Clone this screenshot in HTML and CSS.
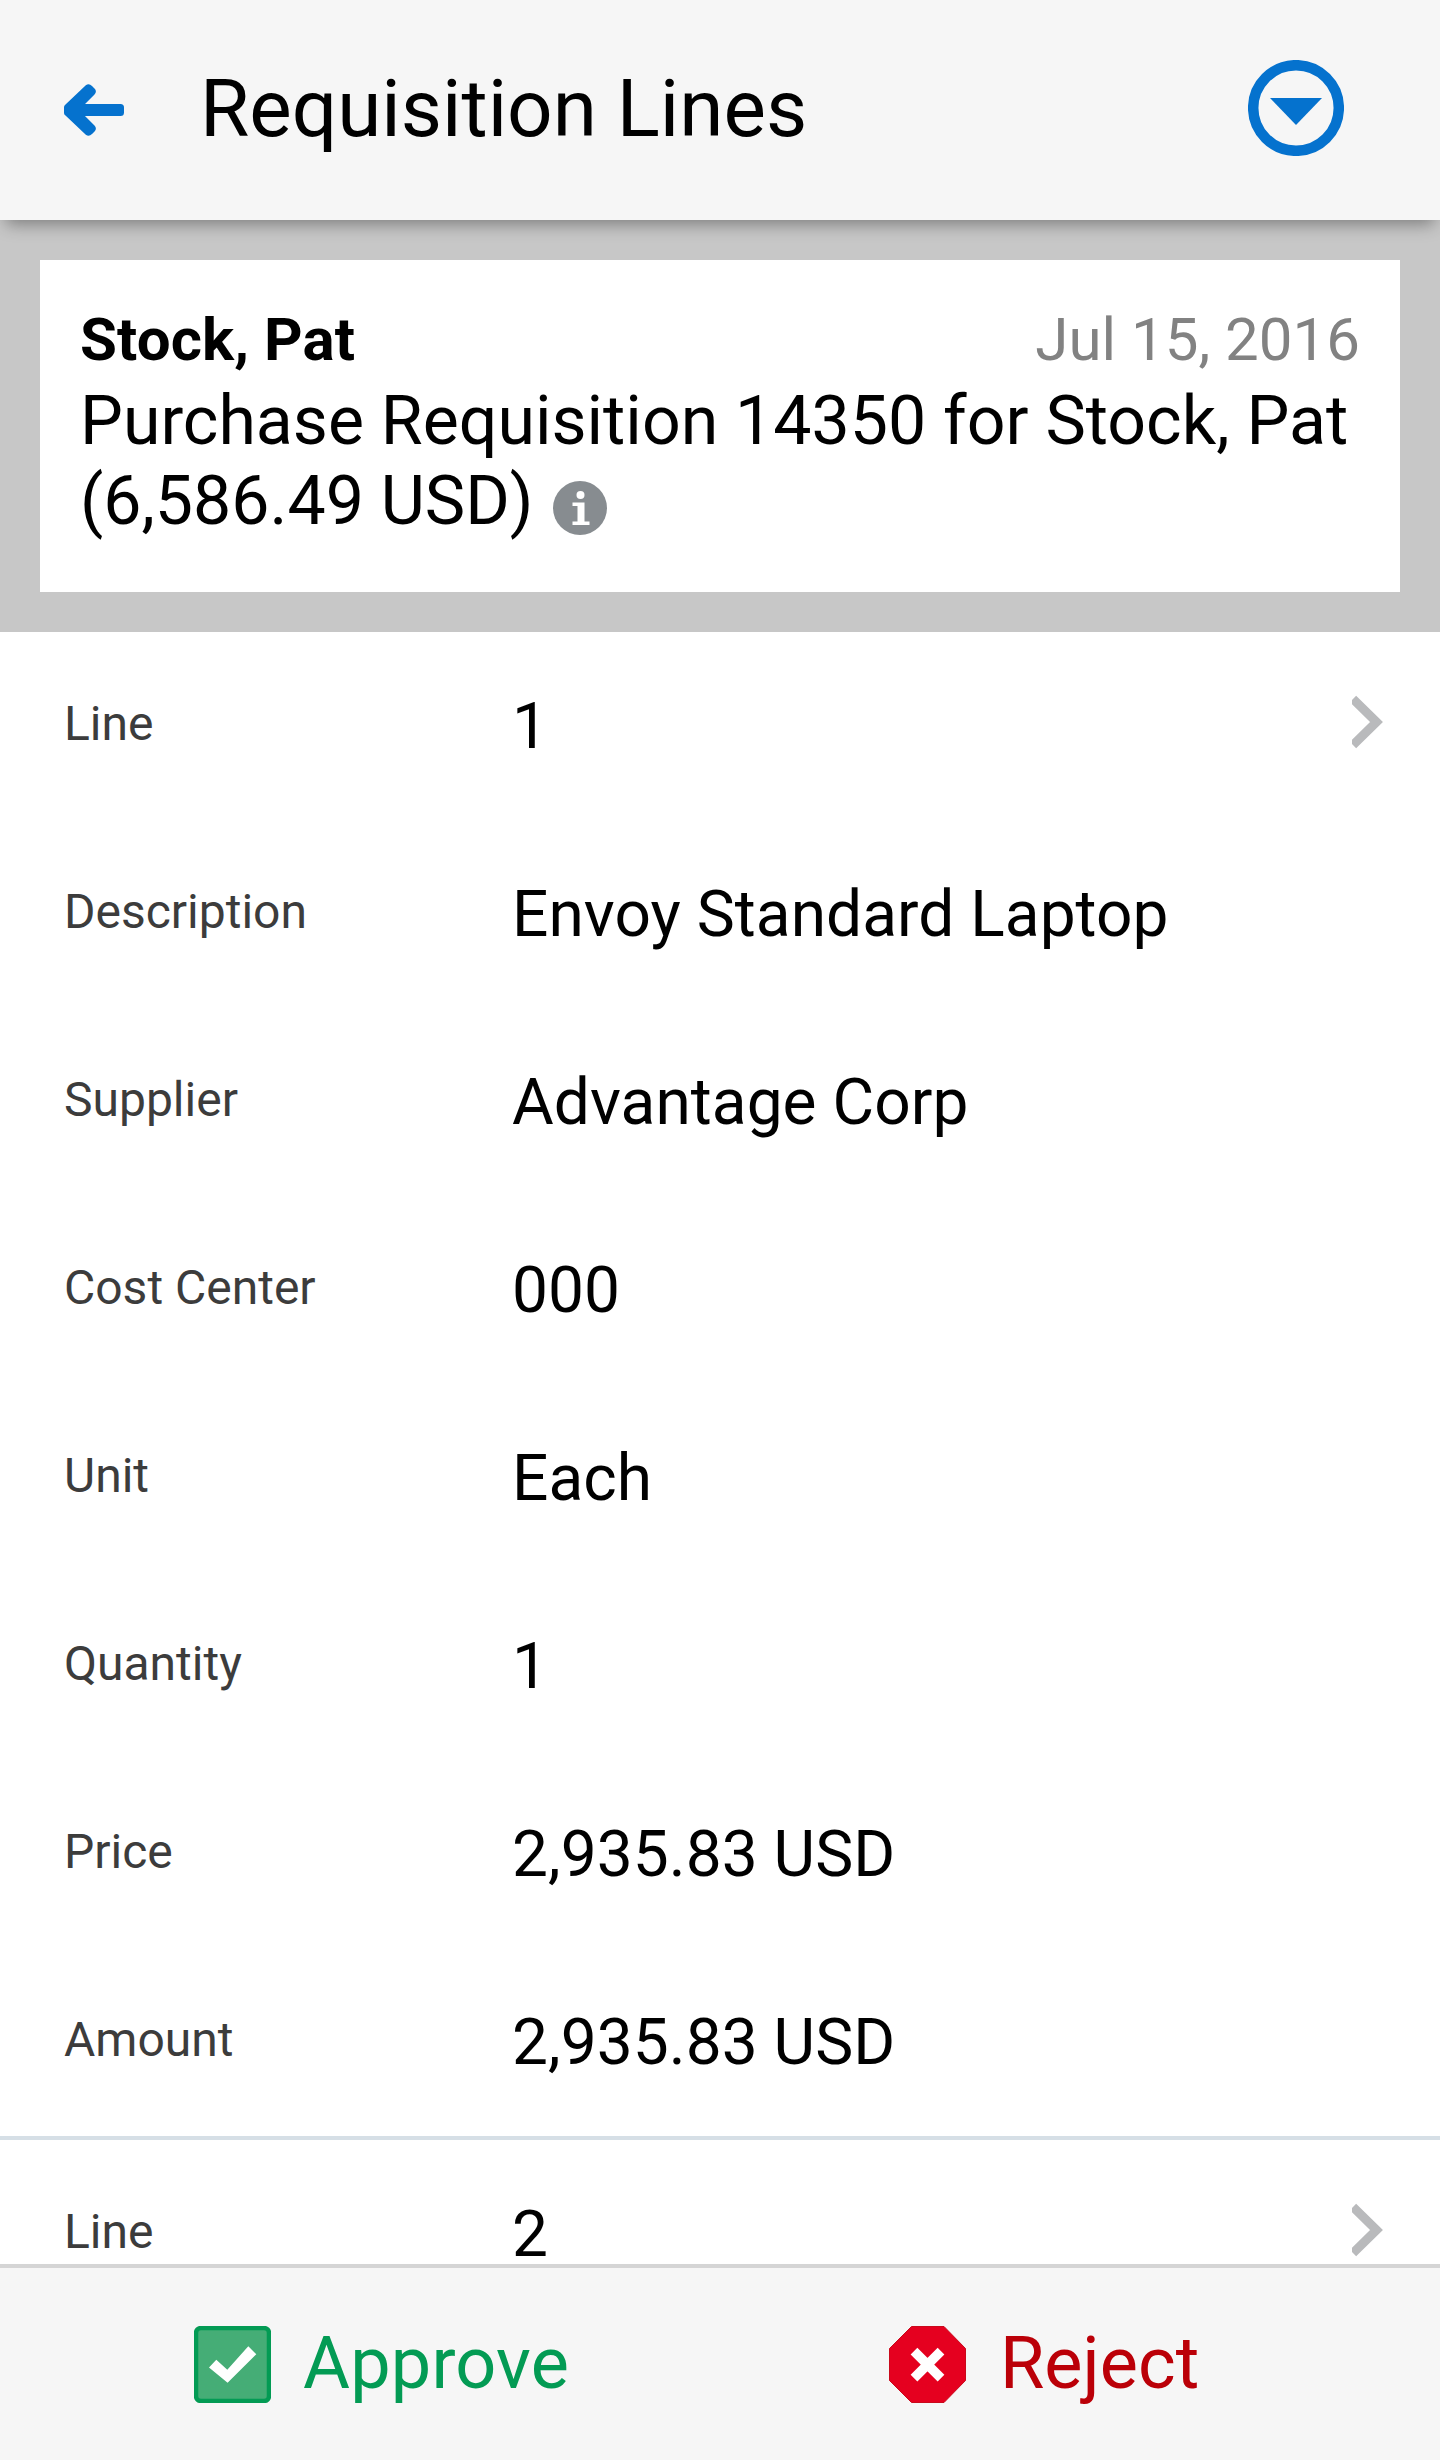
FILE: index.html
```
<!DOCTYPE html>
<html lang="en">
<head>
  <meta charset="UTF-8" />
  <meta name="viewport" content="width=device-width, initial-scale=1.0" />
  <title>Requisition Lines</title>
  <link rel="stylesheet" href="styles.css">
</head>
<body>

  <!-- Top bar -->
  <header class="topbar">
    <svg class="icon-back" viewBox="0 0 60 52" fill="#0572ce">
      <path d="M15 20H56.500Q60 20 60 23.500V28.500Q60 32 56.500 32H15Z" />
      <path d="M1.500 20.500L21.800 1.200Q25 -1.200 28 2L31 5Q33 8 30.500 10.500L15 26L30.500 41.500Q33 44 31 47L28 50Q25 53.200 21.800 50.800L1.500 31.500Q0 30.500 0 29V23Q0 21.500 1.500 20.500Z" />
    </svg>
    <h1>Requisition Lines</h1>
    <svg class="icon-menu" viewBox="0 0 96 96">
      <circle cx="48" cy="48" r="42.8" fill="none" stroke="#0572ce" stroke-width="10.500" />
      <path d="M22 38H74L48 65Z" fill="#0572ce" />
    </svg>
  </header>

  <!-- Requisition summary -->
  <section class="summary">
    <div class="card">
      <div class="card-head">
        <strong>Stock, Pat</strong>
        <span class="date">Jul 15, 2016</span>
      </div>
      <p class="subject">Purchase Requisition 14350 for Stock, Pat (6,586.49 USD)
        <svg class="icon-info" viewBox="0 0 54 54">
          <circle cx="27" cy="27" r="27" fill="#878c90" />
          <circle cx="27.500" cy="14" r="4" fill="#fff" />
          <path d="M19.500 21.500H31.500V40.500H36.500V44H19.500V40.500H24.500V25H19.500Z" fill="#fff" />
        </svg>
      </p>
    </div>
  </section>

  <!-- Lines -->
  <main class="lines">
    <dl class="line">
      <div class="row">
        <dt>Line</dt><dd>1</dd>
        <svg class="chevron" viewBox="0 0 31 54"><path d="M1 4L24.500 27L1 50" /></svg>
      </div>
      <div class="row"><dt>Description</dt><dd>Envoy Standard Laptop</dd></div>
      <div class="row"><dt>Supplier</dt><dd>Advantage Corp</dd></div>
      <div class="row"><dt>Cost Center</dt><dd>000</dd></div>
      <div class="row"><dt>Unit</dt><dd>Each</dd></div>
      <div class="row"><dt>Quantity</dt><dd>1</dd></div>
      <div class="row"><dt>Price</dt><dd>2,935.83 USD</dd></div>
      <div class="row"><dt>Amount</dt><dd>2,935.83 USD</dd></div>
    </dl>
    <dl class="line">
      <div class="row">
        <dt>Line</dt><dd>2</dd>
        <svg class="chevron" viewBox="0 0 31 54"><path d="M1 4L24.500 27L1 50" /></svg>
      </div>
    </dl>
  </main>

  <!-- Actions -->
  <footer class="actions">
    <button class="approve">
      <svg viewBox="0 0 77 77">
        <rect x="2" y="2" width="73" height="73" rx="5" fill="#45ad76" stroke="#039b54" stroke-width="4.500" />
        <path d="M15 41.400L22.300 33.700L33.300 43.700L54.300 20.200L62.300 28.200L33.600 56.700Z" fill="#fff" />
      </svg>
      Approve
    </button>
    <button class="reject">
      <svg viewBox="0 0 77 77">
        <path d="M22.500 .5H55L76.500 22.500V54.500L55 76.500H22.500L.5 54.500V22.500Z" fill="#e5001f" stroke="#c90a1c" />
        <path d="M25 25.200L52 52.200M52 25.200L25 52.200" stroke="#fff" stroke-width="9.500" />
      </svg>
      Reject
    </button>
  </footer>

</body>
</html>
```
FILE: styles.css
```
* {
  box-sizing: border-box;
}

body {
  margin: 0;
  height: 2460px;
  display: flex;
  flex-direction: column;
  overflow: hidden;
  font-family: Roboto, "Liberation Sans", sans-serif;
  background: #fff;
  color: #000;
}

h1, p, dl, dd {
  margin: 0;
}

svg {
  display: block;
  flex: none;
}

/* top bar */
.topbar {
  position: relative;
  z-index: 1;
  flex: none;
  display: flex;
  align-items: center;
  height: 220px;
  padding: 0 96px 4px 64px;
  background: #f6f6f6;
  box-shadow: 0 10px 16px -6px rgba(0, 0, 0, 0.38);
}

.topbar h1 {
  flex: 1;
  margin-left: 76px;
  padding-top: 2px;
  font-size: 80px;
  font-weight: 400;
  line-height: 94px;
}

.icon-back {
  width: 60px;
  height: 52px;
  margin-top: 4px;
}

.icon-menu {
  width: 96px;
  height: 96px;
}

/* summary card */
.summary {
  flex: none;
  padding: 40px;
  background: #c7c7c7;
}

.card {
  height: 332px;
  padding: 44px 40px 0;
  background: #fff;
}

.card-head {
  display: flex;
  justify-content: space-between;
  font-size: 60px;
  line-height: 72px;
}

.card-head strong {
  letter-spacing: 0.1px;
}

.date {
  color: #828282;
}

.subject {
  padding-top: 5px;
  font-size: 68px;
  line-height: 80px;
}

.icon-info {
  display: inline-block;
  width: 54px;
  height: 54px;
  margin-left: 3px;
  vertical-align: -11px;
}

/* lines */
.lines {
  flex: 1;
  min-height: 0;
  overflow: hidden;
}

.line + .line {
  border-top: 4px solid #d6dfe6;
}

.row {
  display: flex;
  height: 188px;
  padding: 0 57px 0 64px;
}

.row dt {
  width: 448px;
  padding-top: 64px;
  font-size: 48px;
  line-height: 56px;
  color: #3c3c3c;
}

.row dd {
  flex: 1;
  padding-top: 67px;
  font-size: 64px;
  line-height: 55px;
  letter-spacing: 0.05px;
}

.chevron {
  width: 31px;
  height: 54px;
  margin-top: 63px;
}

.chevron path {
  fill: none;
  stroke: #b9babc;
  stroke-width: 9;
}

/* bottom actions */
.actions {
  flex: none;
  display: grid;
  grid-template-columns: 695px 1fr;
  height: 196px;
  border-top: 4px solid #d5d5d5;
  background: #f6f6f6;
}

.actions button {
  display: flex;
  align-items: center;
  gap: 32px;
  padding: 0 0 0 194px;
  border: 0;
  background: none;
  font: 400 72px/84px Roboto, "Liberation Sans", sans-serif;
}

.actions svg {
  width: 77px;
  height: 77px;
}

.actions .approve {
  color: #039b54;
  letter-spacing: 0.2px;
}

.actions .reject {
  gap: 34px;
  color: #bb0008;
}
```
